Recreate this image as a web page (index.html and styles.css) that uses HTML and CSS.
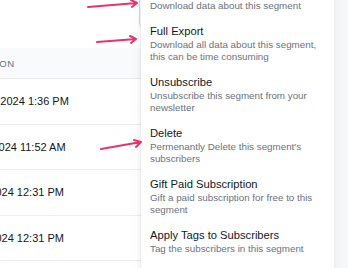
FILE: index.html
```html
<!DOCTYPE html>
<html lang="en">
<head>
    <meta charset="UTF-8">
    <meta name="viewport" content="width=device-width, initial-scale=1.0">
    <title>Segment Actions</title>
    <link rel="stylesheet" href="styles.css">
</head>
<body>
    <div class="page">
        <div class="main">
            <div class="toolbar">
                <button class="actions-btn" type="button">Actions</button>
            </div>

            <table class="subs">
                <thead>
                    <tr><th>Created on</th></tr>
                </thead>
                <tbody>
                    <tr><td>Feb 28, 2024 1:36 PM</td></tr>
                    <tr><td>Apr 2, 2024 11:52 AM</td></tr>
                    <tr><td>Jul 1, 2024 12:31 PM</td></tr>
                    <tr><td>Jul 1, 2024 12:31 PM</td></tr>
                </tbody>
            </table>
        </div>
        <div class="aside"></div>
    </div>

    <div class="dropdown">
        <div class="item">
            <div class="title">Export</div>
            <div class="desc">Download data about this segment</div>
        </div>
        <div class="item">
            <div class="title">Full Export</div>
            <div class="desc">Download all data about this segment, this can be time consuming</div>
        </div>
        <div class="item">
            <div class="title">Unsubscribe</div>
            <div class="desc">Unsubscribe this segment from your newsletter</div>
        </div>
        <div class="item">
            <div class="title">Delete</div>
            <div class="desc">Permenantly Delete this segment's subscribers</div>
        </div>
        <div class="item">
            <div class="title">Gift Paid Subscription</div>
            <div class="desc">Gift a paid subscription for free to this segment</div>
        </div>
        <div class="item">
            <div class="title">Apply Tags to Subscribers</div>
            <div class="desc">Tag the subscribers in this segment</div>
        </div>
    </div>

    <!-- annotation arrows -->
    <svg class="arrows" width="348" height="268" viewBox="0 0 348 268">
        <g fill="none" stroke="#e8336d" stroke-width="2" stroke-linecap="round" stroke-linejoin="round">
            <path d="M88 7 L137 3 M131 0 L137 3 L132 7"/>
            <path d="M97 42 L136 39 M130 36 L136 39 L131 43"/>
            <path d="M101 149 L141 142 M134 140 L141 142 L136 147"/>
        </g>
    </svg>
</body>
</html>
```

FILE: styles.css
```css
body {
    margin: 0;
    font-family: 'Liberation Sans', Arial, sans-serif;
    background-color: #f6f7f9;
    overflow: hidden;
}

.page {
    display: flex;
    height: 268px;
}

.main {
    width: 334px;
    background-color: #fff;
    overflow: hidden;
}

.aside {
    flex: 1;
    background-color: #f6f7f9;
}

.toolbar {
    display: flex;
    height: 48px;
    padding-left: 139px;
}

.actions-btn {
    width: 150px;
    height: 41px;
    margin-top: -12px;
    background: #fff;
    border: 1px solid #d9dce1;
    border-radius: 6px;
    color: #111827;
}

.subs {
    border-collapse: collapse;
    width: 374px;
    margin-left: -40px;
}

.subs th {
    height: 30px;
    padding: 0;
    text-align: left;
    text-indent: -12px;
    background-color: #f9fafb;
    border-bottom: 1px solid #e8eaed;
    color: #6b7280;
    font-size: 9.5px;
    font-weight: normal;
    letter-spacing: 0.5px;
    text-transform: uppercase;
}

.subs td {
    height: 44.5px;
    padding: 0;
    border-bottom: 1px solid #eceef1;
    color: #111827;
    font-size: 11px;
}

.dropdown {
    position: absolute;
    top: -21px;
    left: 141px;
    width: 193px;
    height: 300px;
    background-color: #fff;
    box-shadow: -1px 0 3px rgba(0, 0, 0, 0.06), 0 4px 12px rgba(0, 0, 0, 0.06);
}

.item {
    padding: 6px 14px 6px 9px;
}

.title {
    color: #111827;
    font-size: 11.2px;
    line-height: 15px;
}

.desc {
    color: #6b7280;
    font-size: 9.8px;
    line-height: 12px;
}

.arrows {
    position: absolute;
    top: 0;
    left: 0;
    pointer-events: none;
}
```
